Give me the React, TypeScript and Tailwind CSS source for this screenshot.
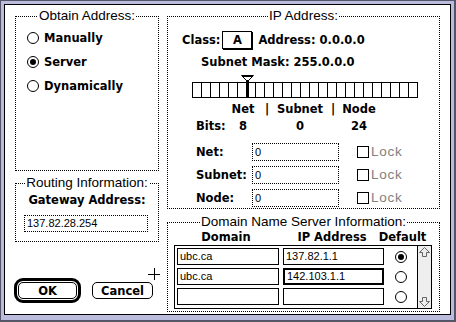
import React from 'react';

const bold = "font-['DejaVu_Sans',sans-serif] font-bold text-[11.5px] leading-[16px] whitespace-nowrap";
const geneva = "font-['Liberation_Sans',sans-serif] text-[13.5px] leading-[14px] whitespace-nowrap";
const small = "font-['Liberation_Sans',sans-serif] text-[11px] leading-[15px] whitespace-nowrap";

function Group({ title, className, children }: { title: string; className: string; children: React.ReactNode }) {
  return (
    <fieldset className={`border border-dotted border-black ${className}`}>
      <legend className={`${geneva} mx-auto px-[1px]`}>{title}</legend>
      {children}
    </fieldset>
  );
}

function Radio({ on }: { on?: boolean }) {
  return (
    <span className="w-[12px] h-[12px] rounded-full border border-black bg-white flex items-center justify-center shrink-0">
      {on && <span className="w-[6px] h-[6px] rounded-full bg-black" />}
    </span>
  );
}

function Arrow({ down }: { down?: boolean }) {
  return (
    <svg width="11" height="10" viewBox="0 0 11 10" className={down ? 'rotate-180' : ''}>
      <path d="M5.5 0.5L10.5 5.5H7.5V9.5H3.5V5.5H0.5Z" fill="none" stroke="#666" strokeWidth="1" />
    </svg>
  );
}

export default function App() {
  const dns = [
    { domain: 'ubc.ca', ip: '137.82.1.1', def: true },
    { domain: 'ubc.ca', ip: '142.103.1.1', focus: true },
    { domain: '', ip: '' },
  ];

  return (
    <div className="w-[456px] h-[322px] bg-[#bbbbdd] border-t border-l border-r-2 border-b-2 border-[#55556a] p-[3px] pb-[5px] text-black">
      <div className="relative h-full border border-black bg-white flex pl-[10px] pt-[4px]">
        {/* left column */}
        <div className="w-[144px] flex flex-col">
          <Group title="Obtain Address:" className="h-[162px]">
            <div className="flex flex-col pl-[11px] pt-[3px]">
              {['Manually', 'Server', 'Dynamically'].map((l, i) => (
                <div key={l} className="h-[24px] flex items-center gap-[5px]">
                  <Radio on={i === 1} />
                  <span className={bold}>{l}</span>
                </div>
              ))}
            </div>
          </Group>

          <Group title="Routing Information:" className="h-[66px] mt-[5px]">
            <div className={`${bold} text-center pt-[2px]`}>Gateway Address:</div>
            <div className={`${small} ml-[8px] mt-[7px] w-[124px] h-[17px] border border-dotted border-black pl-[2px] flex items-center`}>
              137.82.28.254
            </div>
          </Group>

          <div className="mt-[36px] -ml-[1px] flex items-center">
            <div className="border-[3px] border-black rounded-[9px] p-[1px]">
              <button className={`${bold} w-[59px] h-[17px] border border-black rounded-[5px] flex items-center justify-center`}>OK</button>
            </div>
            <button className={`${bold} ml-[11px] w-[61px] h-[17px] border border-black rounded-[5px] flex items-center justify-center`}>Cancel</button>
          </div>
        </div>

        {/* right column */}
        <div className="w-[273px] ml-[8px] flex flex-col">
          <Group title="IP Address:" className="h-[200px]">
            <div className="flex items-center mt-[8px] pl-[14px] h-[18px]">
              <span className={bold}>Class:</span>
              <span className={`${bold} ml-[2px] w-[30px] h-[18px] border border-black shadow-[1px_1px_0_#000] flex items-center justify-center`}>A</span>
              <span className={`${bold} ml-[6px]`}>Address: 0.0.0.0</span>
            </div>
            <div className={`${bold} pl-[33px] mt-[5px]`}>Subnet Mask: 255.0.0.0</div>

            <div className="relative ml-[24px] mt-[12px] w-[226px] h-[16px] border border-black flex">
              {Array.from({ length: 25 }).map((_, i) => (
                <div key={i} className={i === 0 ? 'w-[8px] h-full' : 'w-[9px] h-full border-l border-black'} />
              ))}
              <svg width="13" height="23" viewBox="0 0 13 23" className="absolute left-[48px] top-[-8px]">
                <path d="M0.5 0.5H12.5M0.5 0.5L5.5 5.5M12.5 0.5L7.5 5.5M2 1.5H11" fill="none" stroke="#000" strokeWidth="1" />
                <rect x="5" y="5" width="3" height="18" fill="#000" />
              </svg>
            </div>

            <div className={`${bold} flex mt-[3px] ml-[54px]`}>
              <span className="w-[42px] flex justify-center">Net</span>
              <span className="w-[6px] flex justify-center">|</span>
              <span className="w-[60px] flex justify-center">Subnet</span>
              <span className="w-[6px] flex justify-center">|</span>
              <span className="w-[46px] flex justify-center">Node</span>
            </div>
            <div className={`${bold} flex mt-[1px] ml-[28px]`}>
              <span className="w-[26px]">Bits:</span>
              <span className="w-[42px] flex justify-center">8</span>
              <span className="w-[6px]" />
              <span className="w-[60px] flex justify-center">0</span>
              <span className="w-[6px]" />
              <span className="w-[46px] flex justify-center">24</span>
            </div>

            <div className="flex flex-col gap-[5px] mt-[9px] pl-[28px]">
              {['Net:', 'Subnet:', 'Node:'].map((l) => (
                <div key={l} className="flex items-center h-[18px]">
                  <span className={`${bold} w-[56px]`}>{l}</span>
                  <span className={`${small} w-[87px] h-[18px] border border-dotted border-black pl-[2px] flex items-center`}>0</span>
                  <span className="ml-[18px] w-[12px] h-[12px] border border-black" />
                  <span className={`${geneva} ml-[2px] text-[#808080] tracking-[0.75px]`}>Lock</span>
                </div>
              ))}
            </div>
          </Group>

          <Group title="Domain Name Server Information:" className="h-[97px] mt-[6px]">
            <div className={`${bold} flex ml-[6px]`}>
              <span className="w-[104px] flex justify-center">Domain</span>
              <span className="w-[108px] flex justify-center">IP Address</span>
              <span className="w-[33px] flex justify-center">Default</span>
            </div>
            <div className="ml-[6px] w-[258px] h-[64px] border border-black flex">
              <div className="flex-1 flex flex-col gap-[3px] pt-[2px] pl-[2px]">
                {dns.map((r, i) => (
                  <div key={i} className="flex items-center h-[17px]">
                    <span className={`${small} w-[102px] h-[17px] border border-black pl-[2px] flex items-center`}>{r.domain}</span>
                    <span className={`${small} ml-[4px] w-[101px] h-[17px] ${r.focus ? 'border-2' : 'border'} border-black pl-[2px] flex items-center`}>{r.ip}</span>
                    <span className="w-[33px] flex justify-center">
                      <Radio on={r.def} />
                    </span>
                  </div>
                ))}
              </div>
              <div className="w-[14px] border-l border-black bg-[#eeeeee] flex flex-col justify-between items-center py-[1px]">
                <Arrow />
                <Arrow down />
              </div>
            </div>
          </Group>
        </div>

        {/* cursor */}
        <svg width="12" height="12" viewBox="0 0 12 12" className="absolute left-[143px] top-[263px]">
          <path d="M6 0V12M0 6H12" stroke="#000" strokeWidth="1" shapeRendering="crispEdges" />
        </svg>
      </div>
    </div>
  );
}
